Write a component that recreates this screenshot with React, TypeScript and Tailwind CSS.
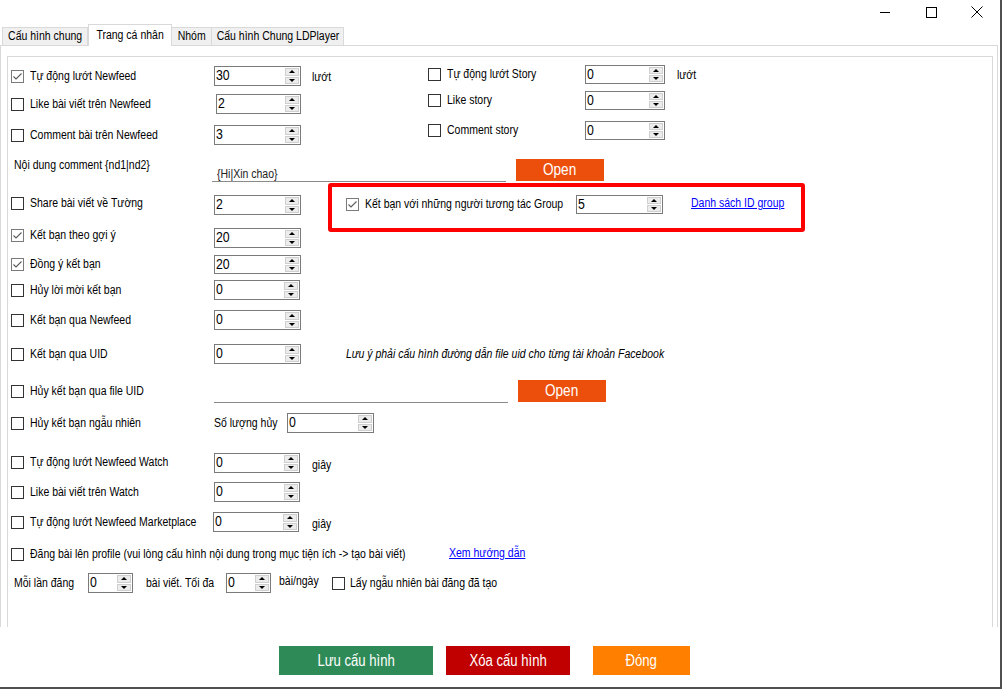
import React from "react";

function T({ children, c = false, cls = "" }: { children: React.ReactNode; c?: boolean; cls?: string }) {
  return (
    <span className={`inline-block whitespace-nowrap scale-x-[0.84] ${c ? "origin-center" : "origin-left"} ${cls}`}>
      {children}
    </span>
  );
}

function Check({ checked }: { checked?: boolean }) {
  return (
    <span
      className={`relative block w-[13px] h-[13px] shrink-0 border bg-white ${
        checked ? "border-[#7a7a7a]" : "border-[#333333]"
      }`}
    >
      {checked && (
        <svg className="absolute left-0 top-0" width="11" height="11" viewBox="0 0 11 11">
          <path d="M1.5 5.5 L4 8 L9.5 2.5" fill="none" stroke="#5a5a5a" strokeWidth="1.1" />
        </svg>
      )}
    </span>
  );
}

function Spin({ v, w, h = "h-[20px]" }: { v: string; w: string; h?: string }) {
  return (
    <div className={`flex shrink-0 border border-[#7a7a7a] bg-white ${w} ${h}`}>
      <span className="flex-1 pl-[1px] overflow-hidden">
        <span className="inline-block origin-left scale-x-[0.82] text-[15px] leading-[13px] text-black">{v}</span>
      </span>
      <div className="flex flex-col w-[15px] py-[1px] pr-[1px] gap-[1px]">
        <div className="flex-1 flex items-center justify-center bg-[#ececec] border border-[#cfcfcf]">
          <span className="block w-0 h-0 border-l-[3px] border-r-[3px] border-b-[3px] border-l-transparent border-r-transparent border-b-black" />
        </div>
        <div className="flex-1 flex items-center justify-center bg-[#ececec] border border-[#cfcfcf]">
          <span className="block w-0 h-0 border-l-[3px] border-r-[3px] border-t-[3px] border-l-transparent border-r-transparent border-t-black" />
        </div>
      </div>
    </div>
  );
}

function LC({
  label,
  checked,
  w = "w-[206px]",
  cls = "",
}: {
  label: string;
  checked?: boolean;
  w?: string;
  cls?: string;
}) {
  return (
    <div className={`flex items-center shrink-0 pl-[3px] ${w} ${cls}`}>
      <Check checked={checked} />
      <span className="ml-[6px]">
        <T>{label}</T>
      </span>
    </div>
  );
}

function RC({ label }: { label: string }) {
  return (
    <div className="flex items-center shrink-0 w-[157px]">
      <Check />
      <span className="ml-[6px]">
        <T>{label}</T>
      </span>
    </div>
  );
}

function OpenBtn() {
  return (
    <div className="w-[88px] h-[22px] shrink-0 bg-[#ec4f0b] text-white flex items-center justify-center">
      <span className="inline-block scale-x-[0.85] text-[16px] leading-[18px]">Open</span>
    </div>
  );
}

function BigBtn({ label, cls }: { label: string; cls: string }) {
  return (
    <div className={`h-[29px] flex items-center justify-center ${cls}`}>
      <span className="inline-block scale-x-[0.82] text-[16px] leading-[18px]">{label}</span>
    </div>
  );
}

export default function App() {
  return (
    <div className="w-[1002px] h-[689px] bg-white flex flex-col border-r-2 border-b-2 border-[#4f4f4f] text-[12.5px] text-black font-['Liberation_Sans',Arial,sans-serif] overflow-hidden">
      {/* title bar */}
      <div className="h-[24px] flex justify-end shrink-0">
        <div className="w-[46px] flex items-center justify-center">
          <svg width="10" height="10" viewBox="0 0 10 10">
            <path d="M0 5.5 H10" stroke="#000" strokeWidth="1" />
          </svg>
        </div>
        <div className="w-[46px] flex items-center justify-center">
          <svg width="11" height="11" viewBox="0 0 11 11">
            <rect x="0.5" y="0.5" width="10" height="10" fill="none" stroke="#000" strokeWidth="1" />
          </svg>
        </div>
        <div className="w-[46px] flex items-center justify-center">
          <svg width="12" height="12" viewBox="0 0 12 12">
            <path d="M0.5 0.5 L11.5 11.5 M11.5 0.5 L0.5 11.5" stroke="#000" strokeWidth="1" />
          </svg>
        </div>
      </div>

      {/* tabs */}
      <div className="flex items-end h-[21px] pl-[2px] shrink-0">
        <div className="h-[18px] w-[86px] bg-[#f0f0f0] border border-b-0 border-[#d9d9d9] flex items-center justify-center">
          <T c>Cấu hình chung</T>
        </div>
        <div className="h-[22px] w-[84px] bg-white border border-b-0 border-[#d9d9d9] -mb-px relative z-10 flex justify-center pt-[1px]">
          <T c>Trang cá nhân</T>
        </div>
        <div className="h-[18px] w-[40px] bg-[#f0f0f0] border border-l-0 border-b-0 border-[#d9d9d9] flex items-center justify-center">
          <T c>Nhóm</T>
        </div>
        <div className="h-[18px] w-[132px] bg-[#f0f0f0] border border-l-0 border-b-0 border-[#d9d9d9] flex items-center justify-center">
          <T c>Cấu hình Chung LDPlayer</T>
        </div>
      </div>

      {/* tab page */}
      <div className="h-[582px] w-[998px] shrink-0 border border-b-0 border-[#d9d9d9] flex flex-col">
        <div className="mt-[10px] ml-[6px] w-[986px] flex-1 border border-b-0 border-[#d9d9d9] pt-[9px] flex flex-col">
          {/* R1 */}
          <div className="flex h-[28px] items-start shrink-0">
            <div className="flex items-center h-[20px] w-[420px] shrink-0">
              <LC label="Tự động lướt Newfeed" checked />
              <Spin v="30" w="w-[87px]" />
              <span className="ml-[11px] mt-[2px]">
                <T>lướt</T>
              </span>
            </div>
            <div className="flex items-center h-[19px] -mt-[1px]">
              <RC label="Tự động lướt Story" />
              <Spin v="0" w="w-[80px]" h="h-[19px]" />
              <span className="ml-[12px] mt-[2px]">
                <T>lướt</T>
              </span>
            </div>
          </div>
          {/* R2 */}
          <div className="flex h-[31px] items-start shrink-0">
            <div className="flex items-center h-[20px] w-[420px] shrink-0">
              <LC label="Like bài viết trên Newfeed" w="w-[208px]" />
              <Spin v="2" w="w-[85px]" />
            </div>
            <div className="flex items-center h-[19px] -mt-[3px]">
              <RC label="Like story" />
              <Spin v="0" w="w-[80px]" h="h-[19px]" />
            </div>
          </div>
          {/* R3 */}
          <div className="flex h-[34px] items-start shrink-0">
            <div className="flex items-center h-[20px] w-[420px] shrink-0">
              <LC label="Comment bài trên Newfeed" />
              <Spin v="3" w="w-[87px]" />
            </div>
            <div className="flex items-center h-[19px] -mt-[4px]">
              <RC label="Comment story" />
              <Spin v="0" w="w-[80px]" h="h-[19px]" />
            </div>
          </div>
          {/* R4 */}
          <div className="flex h-[36px] items-start shrink-0">
            <div className="w-[204px] shrink-0 pl-[6px] leading-[16px] -mt-[2px]">
              <T>Nội dung comment {"{nd1|nd2}"}</T>
            </div>
            <div className="w-[294px] h-[23px] shrink-0 border-b border-[#8a8a8a] pl-[5px] pt-[8px] leading-[14px] text-[#222]">
              <T>{"{Hi|Xin chao}"}</T>
            </div>
            <div className="ml-[10px]">
              <OpenBtn />
            </div>
          </div>
          {/* R5 */}
          <div className="flex h-[33px] items-start shrink-0">
            <div className="flex items-center h-[20px] shrink-0">
              <LC label="Share bài viết về Tường" cls="mb-[3px]" />
              <Spin v="2" w="w-[87px]" />
            </div>
            <div className="ml-[27px] -mt-[12px] h-[49px] w-[477px] shrink-0 border-4 border-[#ff0000] rounded-[3px] pl-[14px] pt-[8px] relative z-10">
              <div className="flex items-center h-[19px]">
                <div className="flex items-center w-[230px] shrink-0">
                  <Check checked />
                  <span className="ml-[6px]">
                    <T>Kết bạn với những người tương tác Group</T>
                  </span>
                </div>
                <Spin v="5" w="w-[87px]" h="h-[19px]" />
                <a className="ml-[28px] text-[#0000ff] mb-[2px]">
                  <T cls="underline">Danh sách ID group</T>
                </a>
              </div>
            </div>
          </div>
          {/* R6 */}
          <div className="flex h-[27px] items-start shrink-0">
            <div className="flex items-center h-[20px] shrink-0">
              <LC label="Kết bạn theo gợi ý" checked cls="mb-[6px]" />
              <Spin v="20" w="w-[87px]" />
            </div>
          </div>
          {/* R7 */}
          <div className="flex h-[25px] items-start shrink-0">
            <div className="flex items-center h-[19px] shrink-0">
              <LC label="Đồng ý kết bạn" checked />
              <Spin v="20" w="w-[87px]" h="h-[19px]" />
            </div>
          </div>
          {/* R8 */}
          <div className="flex h-[30px] items-start shrink-0">
            <div className="flex items-center h-[20px] shrink-0">
              <LC label="Hủy lời mời kết bạn" />
              <Spin v="0" w="w-[86px]" />
            </div>
          </div>
          {/* R9 */}
          <div className="flex h-[34px] items-start shrink-0">
            <div className="flex items-center h-[20px] shrink-0">
              <LC label="Kết bạn qua Newfeed" />
              <Spin v="0" w="w-[87px]" />
            </div>
          </div>
          {/* R10 */}
          <div className="flex h-[36px] items-start shrink-0">
            <div className="flex items-center h-[20px] shrink-0">
              <LC label="Kết bạn qua UID" />
              <Spin v="0" w="w-[87px]" />
              <span className="ml-[45px] italic">
                <T>Lưu ý phải cấu hình đường dẫn file uid cho từng tài khoản Facebook</T>
              </span>
            </div>
          </div>
          {/* R11 */}
          <div className="flex h-[33px] items-start shrink-0">
            <div className="flex items-center h-[20px] mt-[1px] shrink-0">
              <LC label="Hủy kết bạn qua file UID" />
            </div>
            <div className="w-[294px] h-[23px] shrink-0 border-b border-[#8a8a8a]" />
            <div className="ml-[10px]">
              <OpenBtn />
            </div>
          </div>
          {/* R12 */}
          <div className="flex h-[40px] items-start shrink-0">
            <div className="flex items-center h-[20px] shrink-0">
              <LC label="Hủy kết bạn ngẫu nhiên" />
              <span className="w-[73px] shrink-0">
                <T>Số lượng hủy</T>
              </span>
              <Spin v="0" w="w-[87px]" />
            </div>
          </div>
          {/* R13 */}
          <div className="flex h-[29px] items-start shrink-0">
            <div className="flex items-center h-[20px] shrink-0">
              <LC label="Tự động lướt Newfeed Watch" cls="mb-[2px]" />
              <Spin v="0" w="w-[86px]" />
              <span className="ml-[12px] mt-[5px]">
                <T>giây</T>
              </span>
            </div>
          </div>
          {/* R14 */}
          <div className="flex h-[30px] items-start shrink-0">
            <div className="flex items-center h-[20px] shrink-0">
              <LC label="Like bài viết trên Watch" />
              <Spin v="0" w="w-[86px]" />
            </div>
          </div>
          {/* R15 */}
          <div className="flex h-[32px] items-start shrink-0">
            <div className="flex items-center h-[20px] shrink-0">
              <LC label="Tự động lướt Newfeed Marketplace" w="w-[205px]" />
              <Spin v="0" w="w-[86px]" />
              <span className="ml-[13px] mt-[5px]">
                <T>giây</T>
              </span>
            </div>
          </div>
          {/* R16 */}
          <div className="flex h-[29px] items-start shrink-0">
            <div className="flex items-center h-[20px] shrink-0">
              <LC label="Đăng bài lên profile (vui lòng cấu hình nội dung trong mục tiện ích -> tạo bài viết)" w="w-[441px]" />
              <a className="text-[#0000ff] mb-[2px]">
                <T cls="underline">Xem hướng dẫn</T>
              </a>
            </div>
          </div>
          {/* R17 */}
          <div className="flex h-[20px] items-center shrink-0">
            <span className="w-[80px] pl-[6px] shrink-0">
              <T>Mỗi lần đăng</T>
            </span>
            <Spin v="0" w="w-[45px]" />
            <span className="ml-[13px] w-[80px] shrink-0">
              <T>bài viết. Tối đa</T>
            </span>
            <Spin v="0" w="w-[45px]" />
            <span className="ml-[8px] w-[53px] shrink-0 mb-[4px]">
              <T>bài/ngày</T>
            </span>
            <Check />
            <span className="ml-[5px]">
              <T>Lấy ngẫu nhiên bài đăng đã tạo</T>
            </span>
          </div>
        </div>
      </div>

      {/* bottom buttons */}
      <div className="flex pt-[19px] pl-[279px] text-white">
        <BigBtn label="Lưu cấu hình" cls="w-[154px] bg-[#2e8b57]" />
        <BigBtn label="Xóa cấu hình" cls="ml-[13px] w-[124px] bg-[#c00000]" />
        <BigBtn label="Đóng" cls="ml-[23px] w-[97px] bg-[#ff8000]" />
      </div>
    </div>
  );
}
